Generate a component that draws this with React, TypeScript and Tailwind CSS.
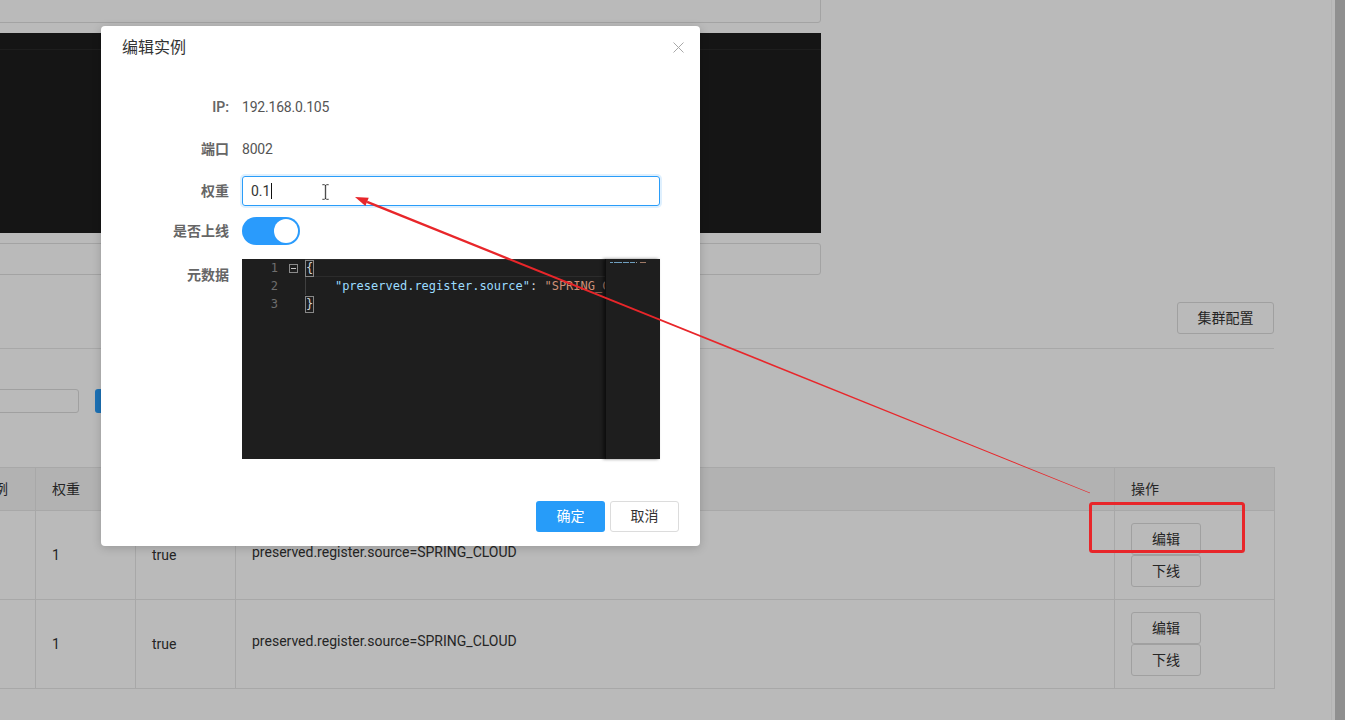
import React from "react";

function PageButton({ children, className = "" }: { children: React.ReactNode; className?: string }) {
  return (
    <div
      className={`flex items-center justify-center rounded-[3px] border border-[#dcdcdc] bg-white text-[14px] text-[#333] ${className}`}
    >
      {children}
    </div>
  );
}

function DataRow() {
  return (
    <tr className="h-[89px]">
      <td className="border border-[#e6e6e6] pl-[16px] text-[14px]">8002</td>
      <td className="border border-[#e6e6e6] pl-[16px] text-[14px]">true</td>
      <td className="border border-[#e6e6e6] pl-[16px] text-[14px]">1</td>
      <td className="border border-[#e6e6e6] pl-[16px] text-[14px]">true</td>
      <td className="border border-[#e6e6e6] pl-[16px] pb-[6px] text-[14px]">preserved.register.source=SPRING_CLOUD</td>
      <td className="border border-[#e6e6e6] pl-[16px]">
        <div className="flex flex-col">
          <PageButton className="h-[32px] w-[70px]">编辑</PageButton>
          <PageButton className="h-[32px] w-[70px]">下线</PageButton>
        </div>
      </td>
    </tr>
  );
}

function FormRow({
  label,
  children,
  className = "",
  labelClass = "",
}: {
  label: string;
  children: React.ReactNode;
  className?: string;
  labelClass?: string;
}) {
  return (
    <div className={`flex ${className}`}>
      <div className={`w-[128px] shrink-0 text-right text-[14px] font-semibold text-[#666] ${labelClass}`}>{label}</div>
      <div className="ml-[13px] flex items-center">{children}</div>
    </div>
  );
}

export default function App() {
  return (
    <div className="relative h-[720px] w-[1345px] overflow-hidden bg-white font-[family-name:Roboto,'Noto_Sans_CJK_SC',sans-serif] text-[#333]">
      {/* page underneath */}
      <div className="flex h-full">
        <div className="h-full flex-1 overflow-hidden">
          <div className="-ml-[200px] w-[1474px]">
            <div className="w-[1021px]">
              <div className="-mt-[11px] h-[34px] rounded-[3px] border border-[#e0e0e0]" />
              <div className="mt-[10px] h-[200px] bg-[#1e1e1e]">
                <div className="h-[17px] border-b border-[#2a2a2a]" />
              </div>
              <div className="mt-[10px] h-[32px] rounded-[3px] border border-[#e0e0e0]" />
            </div>
            <div className="mt-[27px] flex justify-end">
              <PageButton className="h-[32px] w-[97px]">集群配置</PageButton>
            </div>
            <div className="mt-[14px] border-b border-[#e6e6e6]" />
            <div className="mt-[40px] flex items-center gap-[16px]">
              <div className="h-[24px] w-[279px] rounded-[3px] border border-[#dcdcdc]" />
              <div className="flex h-[24px] w-[80px] items-center justify-center rounded-[3px] bg-[#279cf9] text-[13px] text-white">
                查询
              </div>
            </div>
            <table className="mt-[54px] w-[1474px] table-fixed border-collapse">
              <colgroup>
                <col className="w-[135px]" />
                <col className="w-[100px]" />
                <col className="w-[100px]" />
                <col className="w-[100px]" />
                <col className="w-[879px]" />
                <col className="w-[160px]" />
              </colgroup>
              <thead>
                <tr className="h-[43px] bg-[#f4f4f4] text-left text-[14px] font-normal">
                  <th className="border border-[#e6e6e6] pl-[16px] font-normal">端口</th>
                  <th className="border border-[#e6e6e6] pl-[16px] font-normal">临时实例</th>
                  <th className="border border-[#e6e6e6] pl-[16px] font-normal">权重</th>
                  <th className="border border-[#e6e6e6] pl-[16px] font-normal">健康状态</th>
                  <th className="border border-[#e6e6e6] pl-[16px] font-normal">元数据</th>
                  <th className="border border-[#e6e6e6] pl-[16px] font-normal">操作</th>
                </tr>
              </thead>
              <tbody>
                <DataRow />
                <DataRow />
              </tbody>
            </table>
          </div>
        </div>
        {/* scrollbar */}
        <div className="flex h-full w-[14px] border-l border-[#f4f4f4] bg-white pl-[3px]">
          <div className="h-full flex-1 bg-[#c4c4c4]" />
        </div>
      </div>

      {/* overlay + dialog */}
      <div className="absolute inset-0 bg-[rgba(0,0,0,0.27)] pl-[101px] pt-[26px]">
        <div className="flex h-[520px] w-[599px] flex-col rounded-[4px] bg-white shadow-[0_2px_10px_rgba(0,0,0,0.18)]">
          <div className="flex items-start justify-between pl-[21px] pr-[16px] pt-[11px]">
            <div className="text-[16px] leading-[22px] text-[#333]">编辑实例</div>
            <svg width="11" height="11" viewBox="0 0 11 11" className="mt-[5px]">
              <path d="M0.5 0.5L10.5 10.5M10.5 0.5L0.5 10.5" stroke="#a8a8a8" strokeWidth="1" />
            </svg>
          </div>

          <div className="mt-[33px] flex flex-col">
            <FormRow label="IP:" className="h-[30px] items-center">
              <span className="text-[14px] tracking-[-0.2px] text-[#555]">192.168.0.105</span>
            </FormRow>
            <FormRow label="端口" className="mt-[12px] h-[30px] items-center">
              <span className="text-[14px] tracking-[-0.2px] text-[#555]">8002</span>
            </FormRow>
            <FormRow label="权重" className="mt-[12px] h-[30px] items-center">
              <div className="relative flex h-[30px] w-[418px] items-center rounded-[3px] border border-[#2a9df9] pl-[8px] shadow-[0_0_0_2px_rgba(42,157,249,0.15)]">
                <span className="text-[14px] text-[#333]">0.1</span>
                <span className="ml-[1px] h-[16px] w-[1px] bg-[#111]" />
                <svg width="9" height="18" viewBox="0 0 9 18" className="absolute left-[78px] top-[6px]">
                  <path
                    d="M1 1H3.5L4.5 2L5.5 1H8V2.5H5.3V15.5H8V17H5.5L4.5 16L3.5 17H1V15.5H3.7V2.5H1Z"
                    fill="#111"
                    stroke="#fff"
                    strokeWidth="0.7"
                  />
                </svg>
              </div>
            </FormRow>
            <FormRow label="是否上线" className="mt-[11px] h-[28px] items-center">
              <div className="flex h-[28px] w-[58px] items-center justify-end rounded-full bg-[#2a9bfc] p-[2px]">
                <div className="h-[24px] w-[24px] rounded-full bg-white" />
              </div>
            </FormRow>
            <FormRow label="元数据" className="mt-[14px] items-start" labelClass="pt-[5px] leading-[22px]">
              <div className="flex h-[200px] w-[418px] bg-[#1e1e1e] font-[family-name:'DejaVu_Sans_Mono',monospace] text-[12px] leading-[18px]">
                {/* line numbers */}
                <div className="w-[36px] text-right text-[#6e6e6e]">
                  <div className="h-[18px]">1</div>
                  <div className="h-[18px]">2</div>
                  <div className="h-[18px]">3</div>
                </div>
                {/* fold column */}
                <div className="w-[27px]">
                  <div className="flex h-[18px] items-center pl-[11px]">
                    <svg width="9" height="9" viewBox="0 0 9 9">
                      <rect x="0.5" y="0.5" width="8" height="8" fill="none" stroke="#8a8a8a" />
                      <path d="M2 4.5H7" stroke="#c5c5c5" />
                    </svg>
                  </div>
                </div>
                {/* content */}
                <div className="w-[300px] overflow-hidden whitespace-pre">
                  <div className="flex h-[18px] items-center border-y border-[#2c2c2c]">
                    <span className="border border-[#888] leading-[15px] text-[#d4d4d4]">{"{"}</span>
                  </div>
                  <div className="flex h-[18px] items-center border-l border-[#404040]">
                    <span className="text-[#d4d4d4]">{"    "}</span>
                    <span className="text-[#9cdcfe]">"preserved.register.source"</span>
                    <span className="text-[#d4d4d4]">: </span>
                    <span className="text-[#ce9178]">"SPRING_CLOUD"</span>
                  </div>
                  <div className="flex h-[18px] items-center">
                    <span className="border border-[#888] leading-[15px] text-[#d4d4d4]">{"}"}</span>
                  </div>
                </div>
                {/* minimap */}
                <div className="w-[55px] border-l border-[#0e0e0e] bg-[#1e1e1e] shadow-[-2px_0_3px_rgba(0,0,0,0.5)]">
                  <div className="mt-[3px] flex items-center gap-[1px] pl-[4px]">
                    <div className="h-[1px] w-[3px] bg-[#6f9fbf]" />
                    <div className="h-[1px] w-[8px] bg-[#6f9fbf]" />
                    <div className="h-[1px] w-[6px] bg-[#6f9fbf]" />
                    <div className="h-[1px] w-[5px] bg-[#6f9fbf]" />
                    <div className="h-[1px] w-[1px] bg-[#999]" />
                    <div className="ml-[2px] h-[1px] w-[6px] bg-[#a07a66]" />
                  </div>
                </div>
              </div>
            </FormRow>
          </div>

          <div className="mt-[42px] flex justify-end gap-[5px] pr-[21px]">
            <div className="flex h-[31px] w-[69px] items-center justify-center rounded-[3px] bg-[#279cf9] text-[14px] text-white">
              确定
            </div>
            <div className="flex h-[31px] w-[69px] items-center justify-center rounded-[3px] border border-[#dcdcdc] bg-white text-[14px] text-[#333]">
              取消
            </div>
          </div>
        </div>
      </div>

      {/* annotation */}
      <svg className="pointer-events-none absolute inset-0" width="1345" height="720" viewBox="0 0 1345 720">
        <polygon points="367.55,200.65 1090.15,492.63 1089.85,493.37 366.57,203.07" fill="#e8262a" />
        <polygon points="355,197 368.74,197.69 365.38,206.03" fill="#e8262a" />
        <rect x="1090.5" y="503.5" width="153" height="48" rx="2" fill="none" stroke="#e8262a" strokeWidth="3" />
      </svg>
    </div>
  );
}
